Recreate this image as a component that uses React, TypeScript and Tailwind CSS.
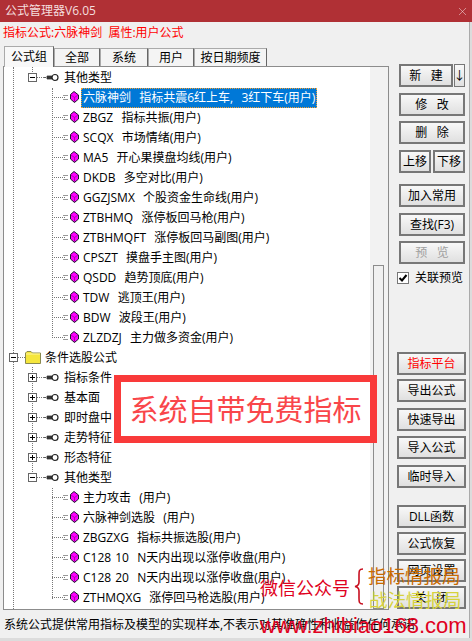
import React from "react";
import { X } from "lucide-react";

const font = { fontFamily: '"Open Sans", "Noto Sans CJK SC", sans-serif' };

const KeyIcon = () => (
  <svg width="15" height="9" viewBox="0 0 15 9" className="shrink-0">
    <path d="M0 4.5h2M3 3h5v3H3z" fill="#333" stroke="#333" strokeWidth="0.8" />
    <circle cx="11" cy="4.5" r="3" fill="#fff" stroke="#222" strokeWidth="1.2" />
  </svg>
);

const Diamond = () => (
  <svg width="9" height="12" viewBox="0 0 9 12" className="shrink-0">
    <path d="M4 .5 8.5 4V8L4.5 11.5.5 8V3.5Z" fill="#ff00ff" stroke="#1a1a2a" strokeWidth="1" />
    <path d="M1 4 4.5 6.500 8 4M4.5 6.500v4.5" fill="none" stroke="#a000a0" strokeWidth="0.8" />
  </svg>
);

const Folder = () => (
  <svg width="16" height="13" viewBox="0 0 16 13" className="shrink-0">
    <path d="M.5 12.5V2L2 .5h4L7.5 2h8v10.5Z" fill="#f5e63c" stroke="#8a8a50" />
    <path d="M1 3h14" stroke="#fff6a0" />
  </svg>
);

const ExpandBox = ({ open }: { open: boolean }) => (
  <div className="relative w-[9px] h-[9px] shrink-0 border border-[#666] bg-white">
    <div className="absolute left-[1px] top-[3px] w-[5px] h-px bg-black" />
    {!open && <div className="absolute left-[3px] top-[1px] w-px h-[5px] bg-black" />}
  </div>
);

const HDots = ({ w }: { w: string }) => <div className={`${w} shrink-0 border-t border-dotted border-[#777]`} />;

const Leaf = ({ text, selected }: { text: string; selected?: boolean }) => (
  <div className="flex items-center h-5 pl-[52px]">
    <HDots w="w-[13px]" />
    <div className="w-[5px] shrink-0 -ml-[2px] mr-[2px] h-[5px] border-y border-[#999]" />
    <Diamond />
    <span
      className={
        selected
          ? "ml-[2px] px-[2px] h-[20px] leading-[19px] translate-y-px whitespace-pre [word-spacing:1px] text-white bg-[#0078d7] outline-1 outline-dotted outline-[#f5a030] -outline-offset-1"
          : "ml-[4px] pt-px whitespace-pre [word-spacing:1px] text-black"
      }
    >
      {text}
    </span>
  </div>
);

const Group = ({ text, open }: { text: string; open?: boolean }) => (
  <div className="flex items-center h-5 pl-[28px]">
    <ExpandBox open={!!open} />
    <HDots w="w-[7px]" />
    <KeyIcon />
    <span className="ml-[5px] pt-px whitespace-pre text-black">{text}</span>
  </div>
);

const Btn = ({
  label,
  className,
  red,
  disabled,
}: {
  label: string;
  className?: string;
  red?: boolean;
  disabled?: boolean;
}) => (
  <div
    className={`h-[23px] flex items-center justify-center whitespace-pre border-2 border-[#777] bg-gradient-to-b from-[#f8f8f8] to-[#e0e0e0] text-[12px] ${
      red ? "text-[#ff0000]" : disabled ? "text-[#a0a0a0]" : "text-black"
    } ${className ?? ""}`}
  >
    {label}
  </div>
);

const Tab = ({ label, active, width }: { label: string; active?: boolean; width: string }) => (
  <div
    className={`${width} flex items-center justify-center border border-b-0 border-[#aaa] bg-[#f4f4f4] border-r-[#666] ${
      active ? "h-[21px] bg-[#f8f8f8] z-10 -mb-px" : "h-[18px]"
    }`}
  >
    {label}
  </div>
);

const leavesA = [
  "ZBGZ  指标共振(用户)",
  "SCQX  市场情绪(用户)",
  "MA5  开心果摸盘均线(用户)",
  "DKDB  多空对比(用户)",
  "GGZJSMX  个股资金生命线(用户)",
  "ZTBHMQ  涨停板回马枪(用户)",
  "ZTBHMQFT  涨停板回马副图(用户)",
  "CPSZT  摸盘手主图(用户)",
  "QSDD  趋势顶底(用户)",
  "TDW  逃顶王(用户)",
  "BDW  波段王(用户)",
  "ZLZDZJ  主力做多资金(用户)",
];

const leavesB = [
  "主力攻击  (用户)",
  "六脉神剑选股  (用户)",
  "ZBGZXG  指标共振选股(用户)",
  "C128 10  N天内出现以涨停收盘(用户)",
  "C128 20  N天内出现以涨停收盘(用户)",
  "ZTHMQXG  涨停回马枪选股(用户)",
];

export default function App() {
  return (
    <div className="relative w-[472px] h-[641px] overflow-hidden bg-[#f0f0f0] text-[12px] text-black" style={font}>
      <div className="h-[22px] bg-[#b03035] flex items-center justify-between pl-[5px] pr-[3px] text-[#f4dede] text-[12px]">
        <span>公式管理器V6.05</span>
        <X size={13} strokeWidth={1} color="#f4dede" />
      </div>

      <div className="h-[24px] pl-[3px] pt-[2px] leading-[18px] whitespace-pre text-[#ff0000]">
        指标公式:六脉神剑  属性:用户公式
      </div>

      <div className="flex">
        <div className="w-[389px] pl-[3px]">
          <div className="flex items-end h-[20px] pl-[1px]">
            <Tab label="公式组" active width="w-[50px]" />
            <Tab label="全部" width="w-[46px]" />
            <Tab label="系统" width="w-[48px]" />
            <Tab label="用户" width="w-[46px]" />
            <Tab label="按日期频度" width="w-[73px]" />
          </div>
          <div className="relative flex h-[544px] border border-[#8c8c8c] bg-white overflow-hidden">
            <div className="flex-1 min-w-0 relative overflow-hidden">
              <div className="absolute left-[9px] top-0 bottom-0 border-l border-dotted border-[#777]" />
              <div className="absolute left-[28px] top-0 h-[7px] border-l border-dotted border-[#777]" />
              <div className="absolute left-[28px] top-[300px] h-[107px] border-l border-dotted border-[#777]" />
              <div className="absolute left-[48px] top-[21px] h-[250px] border-l border-dotted border-[#777]" />
              <div className="absolute left-[48px] top-[421px] h-[111px] border-l border-dotted border-[#777]" />
              <div className="relative -ml-[4px]">
                <Group text="其他类型" open />
                <Leaf text="六脉神剑  指标共震6红上车,  3红下车(用户)" selected />
                {leavesA.map((t) => (
                  <Leaf key={t} text={t} />
                ))}
                <div className="flex items-center h-5 pl-[9px]">
                  <ExpandBox open />
                  <HDots w="w-[7px]" />
                  <Folder />
                  <span className="ml-[4px] pt-px">条件选股公式</span>
                </div>
                <Group text="指标条件" />
                <Group text="基本面" />
                <Group text="即时盘中" />
                <Group text="走势特征" />
                <Group text="形态特征" />
                <Group text="其他类型" open />
                {leavesB.map((t) => (
                  <Leaf key={t} text={t} />
                ))}
              </div>
            </div>
            <div className="w-[18px] shrink-0 bg-[#f2f2f2] pl-[3px] pr-[4px] pt-[198px]">
              <div className="h-full border border-[#8c8c8c] bg-[#f0f0f0]" />
            </div>
          </div>
        </div>

        <div className="w-[83px] pl-[10px] pr-[7px] flex flex-col pt-[18px]">
          <div className="flex gap-[1px]">
            <Btn label="新   建" className="w-[54px]" />
            <Btn label="↓" className="w-[11px] !border-[1.5px]" />
          </div>
          <Btn label="修   改" className="mt-[6px]" />
          <Btn label="删   除" className="mt-[5px]" />
          <div className="flex gap-[2px] mt-[6px]">
            <Btn label="上移" className="flex-1" />
            <Btn label="下移" className="flex-1" />
          </div>
          <Btn label="加入常用" className="mt-[11px]" />
          <Btn label="查找(F3)" className="mt-[6px]" />
          <Btn label="预   览" className="mt-[5px]" disabled />
          <div className="flex items-center gap-[6px] mt-[5px] h-[18px] -ml-[2px] whitespace-nowrap">
            <div className="w-[12px] h-[12px] border border-[#777] bg-white flex items-center justify-center">
              <svg width="10" height="10" viewBox="0 0 10 10">
                <path d="M1.5 5 4 7.5 8.5 2" fill="none" stroke="#000" strokeWidth="2" />
              </svg>
            </div>
            <span>关联预览</span>
          </div>
          <div className="-ml-[2px] -mr-[1px] mt-[65px] flex flex-col">
            <Btn label="指标平台" red />
            <Btn label="导出公式" className="mt-[4px]" />
            <Btn label="快速导出" className="mt-[6px]" />
            <Btn label="导入公式" className="mt-[5px]" />
            <Btn label="临时导入" className="mt-[6px]" />
            <Btn label="DLL函数" className="mt-[17px]" />
            <Btn label="公式恢复" className="mt-[4px]" />
            <Btn label="网页设置" className="mt-[4px]" />
            <Btn label="关   闭" className="mt-[4px]" />
          </div>
        </div>
      </div>

      <div className="h-[24px] pl-[4px] pt-[6px] leading-[18px] whitespace-nowrap overflow-hidden">
        系统公式提供常用指标及模型的实现样本,不表示对其准确性和收益作任何承诺
      </div>
      <div className="absolute right-0 top-[22px] bottom-0 w-[3px] bg-[#dcdcdc] border-l border-[#aaa]" />
      <div className="absolute left-0 right-0 bottom-0 h-[3px] bg-[#dcdcdc]" />

      {/* 图上的红框和水印 */}
      <div className="absolute left-[114px] top-[375px] w-[263px] h-[68px] border-[7px] border-[#f93a3a] bg-white flex items-center justify-center text-[29px] leading-none whitespace-nowrap text-[#f9464a]">
        系统自带免费指标
      </div>
      <div className="absolute left-[260px] top-[576px] text-[18px] leading-[24px] whitespace-nowrap text-[#e00020]">
        微信公众号
      </div>
      <svg width="10" height="37" viewBox="0 0 10 37" className="absolute left-[354px] top-[568px]">
        <path
          d="M9 1C5 1 5 3 5 7V14C5 16 4 18 1 18.500C4 19 5 21 5 23V30C5 34 5 36 9 36"
          fill="none"
          stroke="#c81020"
          strokeWidth="1.6"
        />
      </svg>
      <div className="absolute left-[368px] top-[564px] text-[18.5px] leading-[24px] whitespace-nowrap text-[#c96a00]">
        指标情报局
      </div>
      <div className="absolute left-[369px] top-[588px] text-[18.5px] leading-[24px] whitespace-nowrap text-[#d6d23c]">
        战法情报局
      </div>
      <div
        className="absolute left-[260px] top-[612px] text-[22px] leading-[28px] whitespace-nowrap text-[#e00020]"
        style={{ fontFamily: '"Liberation Sans", sans-serif' }}
      >
        www.zhibiao168.com
      </div>
    </div>
  );
}
